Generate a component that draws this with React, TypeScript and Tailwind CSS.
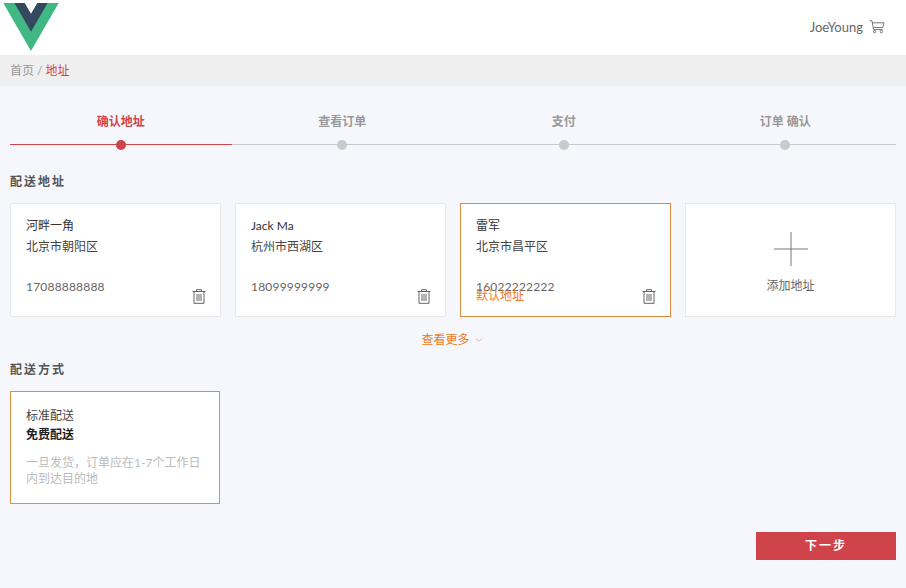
import React from "react"
import { ChevronDown } from "lucide-react"

const FONT = "font-['Lato','Noto_Sans_CJK_SC',sans-serif]"

const steps = [
  { label: "确认地址", active: true },
  { label: "查看订单", active: false },
  { label: "支付", active: false },
  { label: "订单 确认", active: false },
]

const addresses = [
  { name: "河畔一角", city: "北京市朝阳区", phone: "17088888888", selected: false },
  { name: "Jack Ma", city: "杭州市西湖区", phone: "18099999999", selected: false },
  { name: "雷军", city: "北京市昌平区", phone: "16022222222", selected: true },
]

function VueLogo() {
  return (
    <svg viewBox="0 0 261.76 226.69" className="block w-14 h-[48px]">
      <path fill="#41b883" d="M161.096.001l-30.225 52.351L100.647.001H-.005l130.877 226.688L261.749.001z" />
      <path fill="#34495e" d="M161.096.001l-30.225 52.351L100.647.001H52.346l78.526 136.01L209.398.001z" />
    </svg>
  )
}

function CartIcon() {
  return (
    <svg viewBox="0 0 16 14" className="block w-4 h-[14px]" fill="none" stroke="#777" strokeWidth="1">
      <path d="M0.5 0.8H3L4.6 9.5H13.6" />
      <path d="M3.4 2.8H15L13.8 7.5H4.3" />
      <circle cx="5.6" cy="11.6" r="1.2" />
      <circle cx="12.4" cy="11.6" r="1.2" />
    </svg>
  )
}

function TrashIcon() {
  return (
    <svg viewBox="0 0 14 15" className="block w-[14px] h-[15px]" fill="none" stroke="#666" strokeWidth="1">
      <path d="M0.5 2.5H13.5" />
      <path d="M4.5 2.5V0.7H9.5V2.5" />
      <path d="M2 2.5V14.3H12V2.5" />
      <path d="M5 5V12M7 5V12M9 5V12" />
    </svg>
  )
}

function AddressCard({ name, city, phone, selected }: (typeof addresses)[number]) {
  return (
    <div className={`relative h-[114px] bg-white border px-[15px] pt-[11px] ${selected ? "border-[#e08a3c]" : "border-[#e9e9e9]"}`}>
      <div className="text-xs leading-[21px] text-[#333]">{name}</div>
      <div className="text-xs leading-[21px] text-[#444]">{city}</div>
      <div className="mt-[19px] text-xs leading-[21px] tracking-[0.2px] text-[#666]">{phone}</div>
      {selected && (
        <div className="absolute left-[15px] top-[83px] text-xs leading-[18px] text-[#ee7a23]">默认地址</div>
      )}
      <div className="absolute right-[14px] bottom-[12px]">
        <TrashIcon />
      </div>
    </div>
  )
}

export default function App() {
  return (
    <div className={`${FONT} w-[906px] h-[588px] overflow-hidden bg-[#f5f7fc]`}>
      {/* Header */}
      <header className="h-[55px] bg-white flex items-start justify-between pl-[3px] pr-[21px]">
        <div className="pt-[3px]">
          <VueLogo />
        </div>
        <div className="flex items-center gap-[6px] pt-[18px]">
          <span className="text-[13px] leading-[18px] text-[#666]">JoeYoung</span>
          <CartIcon />
        </div>
      </header>

      {/* Breadcrumb */}
      <div className="h-[31px] bg-[#efefef] px-[10px] text-xs leading-[31px] text-[#999]">
        首页 / <span className="text-[#d1434b]">地址</span>
      </div>

      <main className="px-[10px]">
        {/* Steps */}
        <div className="grid grid-cols-4 pt-[26px]">
          {steps.map((step) => (
            <div key={step.label} className="flex flex-col items-center">
              <div className={`text-xs leading-[20px] font-bold ${step.active ? "text-[#d1434b]" : "text-[#999]"}`}>
                {step.label}
              </div>
              <div className="relative mt-[8px] w-full h-[10px] flex items-center justify-center">
                <div className={`absolute inset-x-0 top-[4px] h-px ${step.active ? "bg-[#d1434b]" : "bg-[#c9c9ce]"}`} />
                <div className={`relative w-[10px] h-[10px] rounded-full ${step.active ? "bg-[#d1434b]" : "bg-[#c9c9ce]"}`} />
              </div>
            </div>
          ))}
        </div>

        {/* Addresses */}
        <h2 className="mt-[22px] text-xs leading-[20px] font-bold tracking-[2px] text-[#555]">配送地址</h2>
        <div className="mt-[11px] grid grid-cols-4 gap-[14px]">
          {addresses.map((a) => (
            <AddressCard key={a.phone} {...a} />
          ))}
          <div className="h-[114px] bg-white border border-[#e9e9e9] flex flex-col items-center pt-[28px]">
            <svg viewBox="0 0 34 34" className="block w-[34px] h-[34px]" stroke="#777" strokeWidth="1">
              <path d="M17 0V34M0 17H34" />
            </svg>
            <div className="mt-[11px] text-xs leading-[18px] text-[#666]">添加地址</div>
          </div>
        </div>

        <div className="mt-[14px] flex items-center justify-center gap-[3px] text-xs leading-[18px] text-[#ee7a23]">
          查看更多
          <ChevronDown size={12} strokeWidth={1} />
        </div>

        {/* Delivery */}
        <h2 className="mt-[11px] text-xs leading-[20px] font-bold tracking-[2px] text-[#555]">配送方式</h2>
        <div className="mt-[11px] w-[210px] h-[113px] bg-white border border-[#d8913f] px-[15px] pt-[14px]">
          <div className="text-xs leading-[19px] text-[#444]">标准配送</div>
          <div className="text-xs leading-[19px] font-bold text-[#222]">免费配送</div>
          <div className="mt-[11px] text-xs leading-[16px] text-[#bbb]">一旦发货，订单应在1-7个工作日内到达目的地</div>
        </div>

        <div className="mt-[28px] flex justify-end">
          <button className="w-[140px] h-[28px] bg-[#d1434b] text-white text-xs font-bold tracking-[2px]">下一步</button>
        </div>
      </main>
    </div>
  )
}
